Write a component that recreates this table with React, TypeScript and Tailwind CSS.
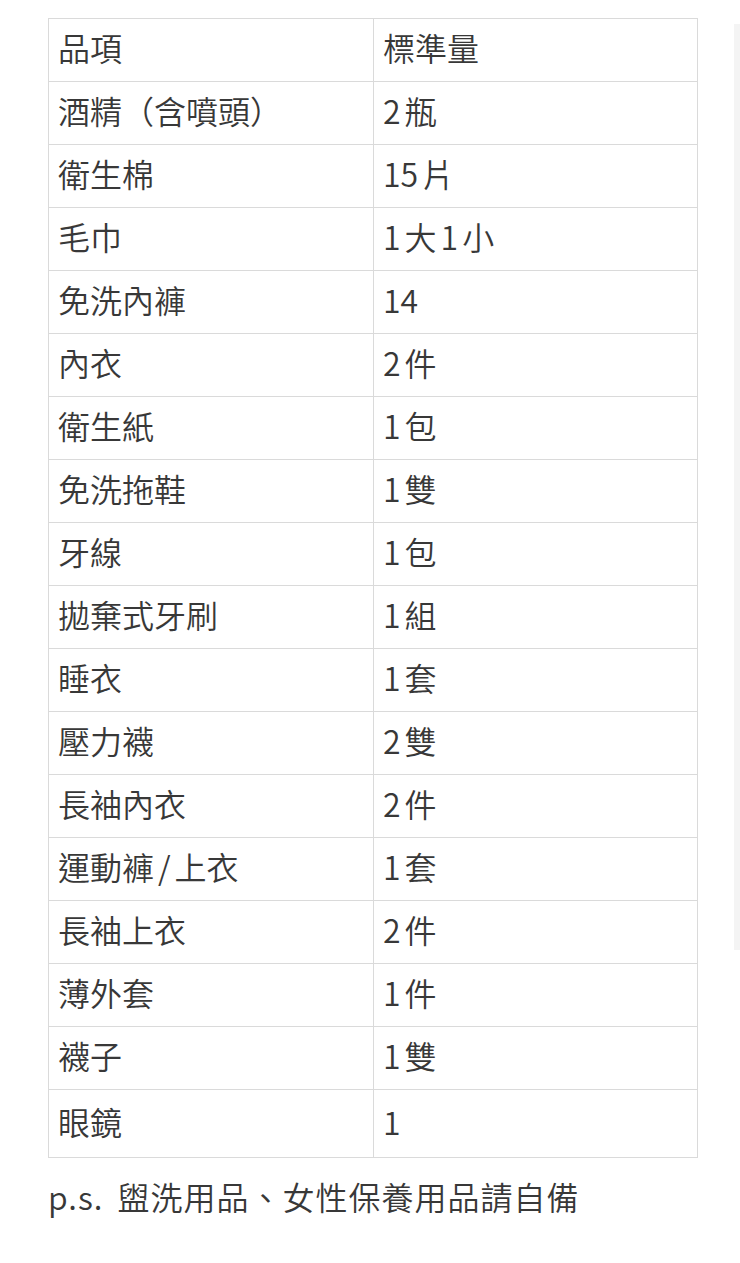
const rows: [string, string][] = [
  ["酒精（含噴頭）", "2瓶"],
  ["衛生棉", "15片"],
  ["毛巾", "1大1小"],
  ["免洗內褲", "14"],
  ["內衣", "2件"],
  ["衛生紙", "1包"],
  ["免洗拖鞋", "1雙"],
  ["牙線", "1包"],
  ["拋棄式牙刷", "1組"],
  ["睡衣", "1套"],
  ["壓力襪", "2雙"],
  ["長袖內衣", "2件"],
  ["運動褲/上衣", "1套"],
  ["長袖上衣", "2件"],
  ["薄外套", "1件"],
  ["襪子", "1雙"],
  ["眼鏡", "1"],
]

// small gap between latin/digits and CJK, like the phone's autospace
function Spaced({ text }: { text: string }) {
  const parts = text.match(/[0-9A-Za-z/]+|[^0-9A-Za-z/]+/g) ?? [text]
  return (
    <>
      {parts.map((p, i) => (
        <span key={i} className={/[0-9A-Za-z/]/.test(p) && i > 0 ? "ml-[4px]" : ""}>
          {p === "/" ? <span className="mr-[4px]">/</span> : p}
          {/[0-9A-Za-z]/.test(p) && i < parts.length - 1 && parts[i + 1] !== "/" ? (
            <span className="inline-block w-[4px]" />
          ) : null}
        </span>
      ))}
    </>
  )
}

export default function App() {
  return (
    <div
      className="relative min-h-[1263px] w-[740px] bg-white text-[#383838]"
      style={{ fontFamily: '"Noto Sans CJK TC", "Noto Sans", sans-serif' }}
    >
      <div className="absolute right-0 top-[24px] h-[926px] w-[6px] bg-[#f4f4f4]" />
      <div className="px-[48px] pt-[18px]">
        <table className="w-[650px] border-collapse text-[32px] font-[350] leading-none">
          <thead>
            <tr className="h-[63px]">
              <th className="w-[325px] border border-[#dadada] px-[9px] pb-[6px] text-left font-[350]">品項</th>
              <th className="border border-[#dadada] px-[9px] pb-[6px] text-left font-[350]">標準量</th>
            </tr>
          </thead>
          <tbody>
            {rows.map(([item, qty], i) => (
              <tr key={i} className={i === rows.length - 1 ? "h-[68px]" : "h-[63px]"}>
                <td className="border border-[#dadada] px-[9px] pb-[6px]">
                  <Spaced text={item} />
                </td>
                <td className="border border-[#dadada] px-[9px] pb-[6px]">
                  <Spaced text={qty} />
                </td>
              </tr>
            ))}
          </tbody>
        </table>
        <p className="mt-[18px] text-[32px] font-[350] leading-[40px] tracking-[1px]">
          p.s.<span className="inline-block w-[14px]" />盥洗用品、女性保養用品請自備
        </p>
      </div>
    </div>
  )
}
